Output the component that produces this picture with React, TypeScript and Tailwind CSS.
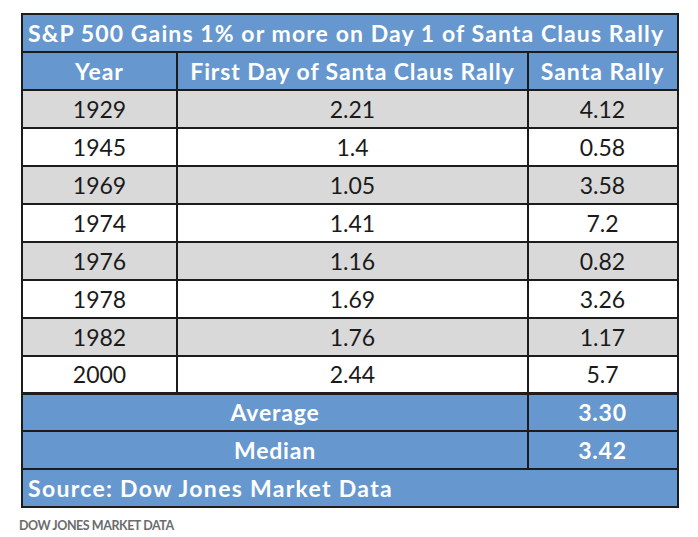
import React from "react";

const rows = [
  ["1929", "2.21", "4.12"],
  ["1945", "1.4", "0.58"],
  ["1969", "1.05", "3.58"],
  ["1974", "1.41", "7.2"],
  ["1976", "1.16", "0.82"],
  ["1978", "1.69", "3.26"],
  ["1982", "1.76", "1.17"],
  ["2000", "2.44", "5.7"],
];

const cols = "grid grid-cols-[155px_351px_147px]";

export default function App() {
  return (
    <div className="w-[698px] h-[537px] bg-white pt-[13px] pl-[21px]" style={{ fontFamily: "Lato, 'Noto Sans', sans-serif" }}>
      <div className="w-[658px] border-2 border-[#1c1c1c] text-[23px] leading-none">
        {/* title */}
        <div className="h-[38px] bg-[#6698cf] border-b-2 border-[#1c1c1c] text-white font-bold flex items-center px-[5px] tracking-[1.1px]">
          S&amp;P 500 Gains 1% or more on Day 1 of Santa Claus Rally
        </div>

        {/* header */}
        <div className={`${cols} h-[38px] bg-[#6698cf] border-b-2 border-[#1c1c1c] text-white font-bold tracking-[1px]`}>
          <div className="flex items-center justify-center border-r-2 border-[#1c1c1c]">Year</div>
          <div className="flex items-center justify-center border-r-2 border-[#1c1c1c] tracking-[0.9px]">First Day of Santa Claus Rally</div>
          <div className="flex items-center justify-center">Santa Rally</div>
        </div>

        {/* data */}
        {rows.map((r, i) => (
          <div
            key={r[0]}
            className={`${cols} h-[38px] border-[#1c1c1c] text-[#1a1a1a] ${i % 2 === 0 ? "bg-[#d9d9d9]" : "bg-white"} ${i === rows.length - 1 ? "border-b-[3px]" : "border-b-2"}`}
          >
            <div className="flex items-center justify-center border-r-2 border-[#1c1c1c]">{r[0]}</div>
            <div className="flex items-center justify-center border-r-2 border-[#1c1c1c]">{r[1]}</div>
            <div className="flex items-center justify-center">{r[2]}</div>
          </div>
        ))}

        {/* summary */}
        <div className="grid grid-cols-[506px_147px] h-[37px] bg-[#6698cf] border-b-2 border-[#1c1c1c] text-white font-bold tracking-[0.8px]">
          <div className="flex items-center justify-center border-r-2 border-[#1c1c1c]">Average</div>
          <div className="flex items-center justify-center">3.30</div>
        </div>
        <div className="grid grid-cols-[506px_147px] h-[38px] bg-[#6698cf] border-b-2 border-[#1c1c1c] text-white font-bold tracking-[0.8px]">
          <div className="flex items-center justify-center border-r-2 border-[#1c1c1c]">Median</div>
          <div className="flex items-center justify-center">3.42</div>
        </div>
        <div className="h-[36px] bg-[#6698cf] text-white font-bold flex items-center px-[5px] tracking-[1.3px]">
          Source: Dow Jones Market Data
        </div>
      </div>

      <div className="mt-[9px] -ml-[2px] text-[12.5px] font-bold text-[#6b6b6b] tracking-[-0.45px]">DOW JONES MARKET DATA</div>
    </div>
  );
}
